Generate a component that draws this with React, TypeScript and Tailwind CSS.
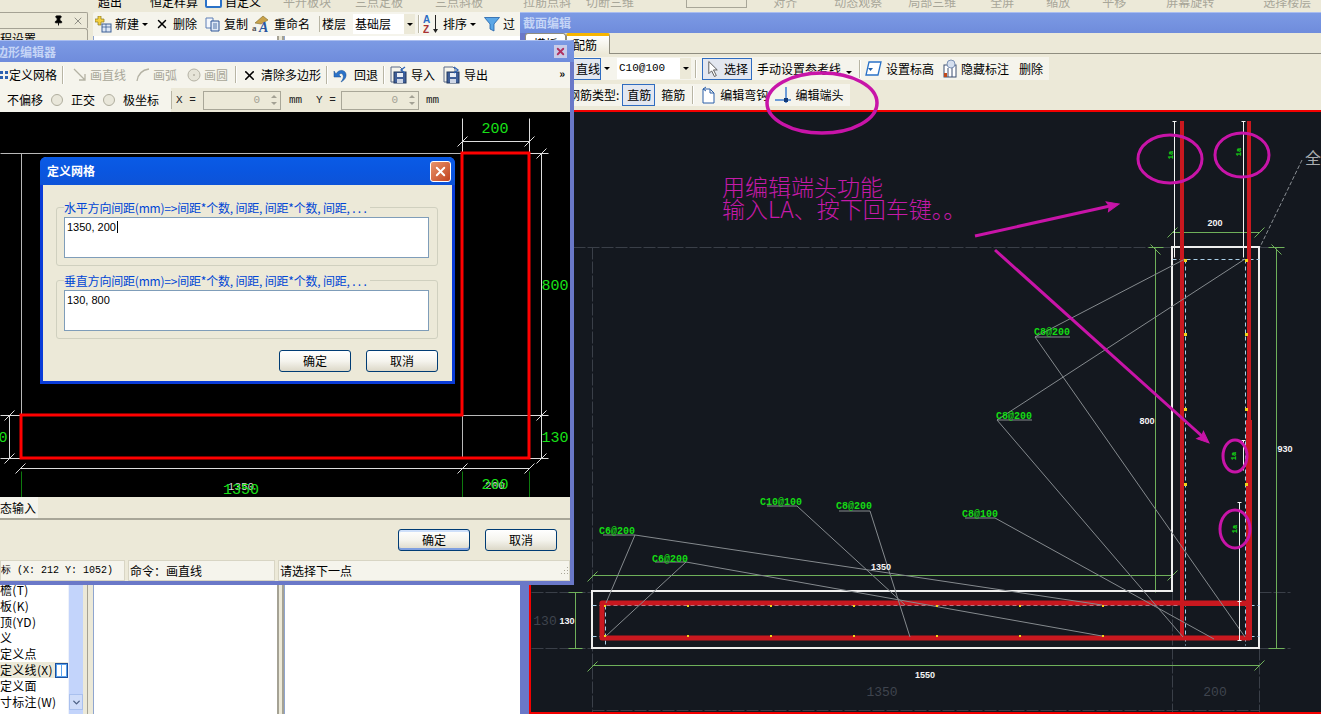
import { X, Pin, ChevronDown } from "lucide-react";
import type { ReactNode } from "react";

const cn = "font-['Noto_Sans_CJK_SC','Liberation_Sans',sans-serif]";
const DIM = "#6fb05a";
const GREEN = "#14dc14";
const PURPLE = "#c814a8";

function Arrow() {
  return <span className="mx-[3px] inline-block border-x-[3px] border-t-[3px] border-x-transparent border-t-black" />;
}

function Sep() {
  return <span className="mx-[5px] h-[18px] w-[2px] border-l border-r border-l-[#b8b5a4] border-r-white shrink-0" />;
}

function Btn({ children, active, className = "" }: { children: ReactNode; active?: boolean; className?: string }) {
  return (
    <span className={`flex items-center h-[22px] px-[4px] whitespace-nowrap ${active ? "border border-[#2f6cc0] bg-[#e3e7f0]" : ""} ${className}`}>
      {children}
    </span>
  );
}

function NewIcon() {
  return (
    <svg width="17" height="17" viewBox="0 0 17 17" className="mr-[3px]">
      <path d="M3 0h3v3h3v3H6v3H3V6H0V3h3z" fill="#f4d03f" stroke="#8a7a20" strokeWidth="0.7" />
      <rect x="7" y="8" width="9" height="8" fill="#dce6f5" stroke="#3c5f96" />
      <path d="M7 11h9M11 8v8" stroke="#3c5f96" strokeWidth="0.8" />
    </svg>
  );
}

function CopyIcon() {
  return (
    <svg width="15" height="15" viewBox="0 0 15 15" className="mr-[4px]">
      <path d="M1 1h7v10H1z" fill="#f4f7fc" stroke="#5c7fb5" />
      <path d="M6 4h8v10H6z" fill="#dfe9f7" stroke="#2e5596" />
      <path d="M8 7h4M8 9h4M8 11h4" stroke="#2e5596" strokeWidth="0.8" />
    </svg>
  );
}

function RenameIcon() {
  return (
    <svg width="19" height="18" viewBox="0 0 19 18" className="mr-[3px]">
      <path d="M3 8 L11 1 L16 5 L9 9z" fill="#c9a24a" stroke="#7d6a2a" strokeWidth="0.6" />
      <text x="0" y="16" fontSize="9" fontFamily="Liberation Serif" fontWeight="700" fill="#555">a</text>
      <text x="7" y="17" fontSize="14" fontFamily="Liberation Serif" fontWeight="700" fontStyle="italic" fill="#2754a0">A</text>
    </svg>
  );
}

function SortIcon() {
  return (
    <svg width="17" height="21" viewBox="0 0 17 21" className="mr-[3px]">
      <text x="0" y="9" fontSize="10" fontFamily="Liberation Sans" fontWeight="700" fill="#2b6cc4">A</text>
      <text x="0" y="19" fontSize="10" fontFamily="Liberation Sans" fontWeight="700" fill="#a83232">Z</text>
      <path d="M12.5 1v15" stroke="#222" />
      <path d="M10 15h5l-2.500 4z" fill="#222" />
    </svg>
  );
}

function FunnelIcon() {
  return (
    <svg width="16" height="16" viewBox="0 0 16 16" className="mr-[3px]">
      <path d="M0.500 1.500h15L10 8v7l-4-2V8z" fill="#5ba7e6" stroke="#1f5fa8" strokeWidth="0.8" />
    </svg>
  );
}

function DiskIcon({ out }: { out?: boolean }) {
  return (
    <svg width="18" height="18" viewBox="0 0 18 18" className="mr-[3px]">
      <path d="M1 1h9l2 2v3M1 1v15h3" fill="none" stroke="#5a6b88" />
      <rect x="4" y="6" width="12" height="11" fill="#3f5f98" stroke="#22385f" />
      <rect x="7" y="7" width="6" height="4" fill="#e9eef6" />
      <rect x="7" y="13" width="6" height="4" fill="#cfd7e6" />
      <path d={out ? "M11 1l4 3-4 3" : "M15 1l-4 3 4 3"} fill="none" stroke="#2c64b8" strokeWidth="1.300" />
    </svg>
  );
}

function UndoIcon() {
  return (
    <svg width="16" height="16" viewBox="0 0 16 16" className="mr-[5px]">
      <path d="M3 7 C6 1 14 3 13 9 C12.500 12 10 14 8 15 C10 12 11 10 10 8 C9 6 7 6 6 8 L8 10 H1 V4z" fill="#2a72c8" stroke="#174c90" strokeWidth="0.5" />
    </svg>
  );
}

function GridIcon() {
  return (
    <svg width="8" height="14" viewBox="0 0 8 14" className="mr-[1px]">
      <path d="M0 3h3v3H0zM5 3h3v3H5zM0 8h3v3H0zM5 8h3v3H5z" fill="#2e62b0" />
    </svg>
  );
}

function Spin({ v }: { v: string }) {
  return (
    <span className="flex h-[19px] w-[78px] items-center border border-[#a9a798] bg-[#ece9d8] text-[#a3a194] font-['Liberation_Mono',monospace] text-[11px]">
      <span className="flex-1 text-right pr-[7px]">{v}</span>
      <span className="flex w-[13px] flex-col items-center gap-[4px]">
        <span className="border-x-[3px] border-b-[3px] border-x-transparent border-b-[#a3a194]" />
        <span className="border-x-[3px] border-t-[3px] border-x-transparent border-t-[#a3a194]" />
      </span>
    </span>
  );
}

function Radio() {
  return <span className="mx-[8px] h-[12px] w-[12px] rounded-full border border-[#b0ae9e] bg-[#e9e7da] shrink-0" />;
}

function XpButton({ children, primary, className = "" }: { children: ReactNode; primary?: boolean; className?: string }) {
  return (
    <span className={`flex h-[22px] w-[72px] items-center justify-center rounded-[3px] border border-[#003c74] bg-gradient-to-b from-white via-[#f5f4ee] to-[#dcd8c8] text-[12px] text-black ${primary ? "shadow-[inset_0_-2px_0_#7f9fe0,inset_0_2px_0_#cfe0fa]" : ""} ${className}`}>
      {children}
    </span>
  );
}

const treeRows = ["檐(T)", "板(K)", "顶(YD)", "义", "定义点", "定义线(X)", "定义面", "寸标注(W)"];

function Background() {
  return (
    <div className="flex h-full flex-col">
      {/* faded main toolbar, cut off at the top */}
      <div className="flex h-[12px] items-end overflow-hidden bg-[#ece9d8] text-[12px] leading-[12px] text-[#a8a698] whitespace-nowrap">
        <div className="relative -top-[4px] flex items-center pl-[98px]">
          <span className="text-black">超出</span>
          <span className="ml-[28px] text-black">恒定样算</span>
          <span className="ml-[7px] h-[12px] w-[17px] rounded-b-[2px] border-2 border-[#2a72c8] bg-white" />
          <span className="ml-[3px] text-black">自定义</span>
          <span className="ml-[22px]">平开板块</span>
          <span className="ml-[24px]">三点定板</span>
          <span className="ml-[32px]">三点斜板</span>
          <span className="ml-[40px]">拉筋点斜</span>
          <span className="ml-[15px]">切断三维</span>
          <span className="ml-[52px] h-[12px] w-[61px] border border-[#a8a698]" />
          <span className="ml-[26px]">对齐</span>
          <span className="ml-[37px]">动态观察</span>
          <span className="ml-[26px]">局部三维</span>
          <span className="ml-[34px]">全屏</span>
          <span className="ml-[32px]">缩放</span>
          <span className="ml-[32px]">平移</span>
          <span className="ml-[40px]">屏幕旋转</span>
          <span className="ml-[49px]">选择楼层</span>
        </div>
      </div>

      <div className="flex min-h-0 flex-1">
        {/* left tree panel */}
        <div className="flex w-[88px] shrink-0 flex-col bg-[#ece9d8]">
          <div className="flex h-[16px] shrink-0 items-center justify-end gap-[8px] rounded-tr-[2px] border-t border-r border-[#a5a294] pr-[3px]">
            <Pin size={11} className="text-black" fill="black" />
            <X size={12} strokeWidth={1} className="text-[#333]" />
          </div>
          <div className="h-[24px] shrink-0 overflow-hidden rounded-tr-[3px] border-t border-r border-[#a5a294] pt-[2px] text-[12px] leading-[16px] whitespace-nowrap">程设置</div>
          <div className="flex min-h-0 flex-1 border-r border-[#a5a294] pr-[4px]">
            <div className="flex flex-1 min-h-0 bg-white">
              <div className="flex flex-1 min-w-0 flex-col">
                <div className="mt-auto mb-[4px] flex flex-col text-[12px] leading-[16px] whitespace-nowrap">
                  {treeRows.map((row) => (
                    <div key={row} className={`flex h-[16px] items-center overflow-hidden ${row === "定义线(X)" ? "bg-[#ece9d8]" : ""}`}>
                      <span className="tracking-[0.3px]">{row}</span>
                      {row === "定义线(X)" && (
                        <span className="ml-auto flex h-[15px] w-[13px] shrink-0 gap-[1px] border border-[#1c4f9c] bg-[#5aa3ee] p-[1px]">
                          <span className="flex-1 bg-white" />
                          <span className="flex-1 bg-white" />
                        </span>
                      )}
                    </div>
                  ))}
                </div>
              </div>
              <div className="flex w-[15px] shrink-0 flex-col border-l border-[#eef2fb] bg-[#c3d4fb]">
                <div className="mt-auto mb-[4px] flex h-[16px] items-center justify-center border border-[#a9c0ee] bg-[#cfdcf9] text-[#4d6185]">
                  <ChevronDown size={11} strokeWidth={3} />
                </div>
              </div>
            </div>
          </div>
        </div>

        <div className="min-w-0 flex-1 flex-col">
          <div className="ml-[5px] flex h-[24px] items-center rounded-tl-[3px] bg-[#f5f4ec] pl-[2px] text-[12px] whitespace-nowrap">
            <Btn className="!px-0"><NewIcon />新建<Arrow /></Btn>
            <Btn className="!pl-[4px]"><X size={14} strokeWidth={2.500} className="mr-[4px]" />删除</Btn>
            <Btn><CopyIcon />复制</Btn>
            <Btn className="!pl-0"><RenameIcon />重命名</Btn>
            <span className="ml-[5px] h-[16px] w-px bg-[#b8b5a4]" />
            <span className="ml-[2px]">楼层</span>
            <span className="ml-[7px] flex h-[20px] w-[62px] items-center justify-between bg-white pl-[2px]">基础层<span className="flex h-full w-[11px] items-center justify-center bg-[#ece9d8]"><span className="border-x-[3px] border-t-[3px] border-x-transparent border-t-black" /></span></span>
            <span className="mx-[3px] h-[18px] w-[2px] border-x border-l-[#b8b5a4] border-r-white shrink-0" />
            <SortIcon />排序<Arrow />
            <span className="ml-[5px] flex items-center"><FunnelIcon />过</span>
          </div>
          <div className="flex h-[calc(100%-24px)]">
            <div className="w-[5px] bg-[#ece9d8]" />
            <div className="w-[184px] border-l border-[#8fa5cf] bg-white" />
            <div className="w-[7px] border-x-2 border-[#a5a294] bg-[#ece9d8]" />
            <div className="flex-1 border-l border-[#8fa5cf] bg-white" />
          </div>
        </div>
      </div>
    </div>
  );
}

function Tick({ x, y, dir = 1 }: { x: number; y: number; dir?: number }) {
  return <path d={`M${x - 5 * dir} ${y + 5}L${x + 5 * dir} ${y - 5}`} stroke="currentColor" />;
}

const rebarLabels = [
  { t: "C8@200", x: 1052, y: 335 },
  { t: "C8@200", x: 1014, y: 419 },
  { t: "C10@100", x: 781, y: 505 },
  { t: "C8@200", x: 854, y: 509 },
  { t: "C8@100", x: 980, y: 517 },
  { t: "C6@200", x: 617, y: 534 },
  { t: "C6@200", x: 670, y: 562 },
];

const leaders = [
  "M1035 337H1070", "M1035 337L1185 259", "M1035 337L1245 637",
  "M997 420H1032", "M997 420L1245 259", "M997 420L1183 637",
  "M767 506H797L905 605",
  "M839 511H870L910 637",
  "M965 518H995L1214 639",
  "M603 535H635L1102 605", "M635 535L606 603",
  "M655 562H686L1102 636", "M686 562L606 636",
];

const rebarDots = [605, 688, 771, 854, 937, 1020, 1103];
const colDots = [259, 333, 408, 483];

function SectionDrawing() {
  return (
    <svg viewBox="531 112 790 600" className="block h-full w-full" fontFamily="Liberation Mono, monospace">
      {/* construction grid */}
      <g stroke="#3a3f48" strokeDasharray="12 2" fill="none" transform="translate(0.5 0.5)">
        <path d="M531 247H1172M1259 247H1272M531 592H592M1259 592H1290M531 648H592M1259 648H1290" />
        <path d="M592 247V712M1172 591V712M1259 648V712M592 710H1259" />
      </g>
      <g fill="#3f444e" fontSize="13" textAnchor="middle">
        <text x="882" y="696">1350</text>
        <text x="1215" y="696">200</text>
        <text x="545" y="625">130</text>
      </g>

      {/* dimensions */}
      <g stroke={DIM} fill="none" color={DIM} transform="translate(0.5 0.5)">
        <path d="M1172 232H1259" />
        <Tick x={1172} y={232} /><Tick x={1259} y={232} />
        <path d="M1155 248V592M1148 247H1163" />
        <Tick x={1155} y={249} dir={-1} />
        <path d="M1276 248V648M1268 247H1284M1268 648H1284" />
        <Tick x={1276} y={249} dir={-1} />
        <path d="M592 575H1172" />
        <Tick x={592} y={576} /><Tick x={1172} y={575} />
        <path d="M592 665H1259" />
        <Tick x={592} y={666} /><Tick x={1259} y={665} />
        <path d="M575 592V648M568 592H582M568 648H582" />
      </g>

      {/* concrete outline */}
      <path d="M592 591H1172V247H1259V648H592Z" fill="none" stroke="#eeeeee" strokeWidth="2" />

      {/* stirrup centre lines */}
      <g stroke="#a9cfe8" strokeDasharray="4 3" fill="none" transform="translate(0.5 0.5)">
        <path d="M592 605H1259M592 636H1259M1172 259H1259M605 605V645M1185 259V645M1245 259V645" />
      </g>

      {/* rebars */}
      <g fill="#c9181f">
        <rect x="1180" y="121" width="4" height="519" />
        <rect x="1247" y="121" width="4" height="300" />
        <rect x="1246" y="420" width="6" height="220" />
        <rect x="1180" y="601" width="67" height="5" />
      </g>
      <path d="M1247 603H602V638H1250" fill="none" stroke="#c9181f" strokeWidth="5" strokeLinejoin="round" />

      {/* leaders */}
      <g stroke="#858a8e" fill="none">
        {leaders.map((d) => <path key={d} d={d} />)}
      </g>

      <g fill="#f2d21a">
        {rebarDots.map((x) => (
          <g key={x}>
            <rect x={x - 1} y={605} width="2" height="2" />
            <rect x={x - 1} y={635} width="2" height="2" />
          </g>
        ))}
        {colDots.map((y) => (
          <g key={y}>
            <rect x={1184} y={y} width="3" height="3" />
            <rect x={1245} y={y} width="3" height="3" />
          </g>
        ))}
      </g>

      {/* bar ends */}
      <g stroke="#f4f4f4" fill="none" transform="translate(0.5 0.5)">
        <path d="M1174 121V257M1172 121H1176M1243 121V257M1241 121H1245M1243 440V470M1241 440H1245M1239 502V640M1237 502H1241M1237 601H1241M1237 640H1241" />
      </g>

      <g fill={GREEN} fontSize="7" fontWeight="700" textAnchor="middle">
        <text transform="translate(1173 155) rotate(-90)">1a</text>
        <text transform="translate(1241 152) rotate(-90)">1a</text>
        <text transform="translate(1236 456) rotate(-90)">1a</text>
        <text transform="translate(1237 529) rotate(-90)">1a</text>
      </g>

      <g fill={GREEN} fontSize="10" fontWeight="700" textAnchor="middle">
        {rebarLabels.map((l) => <text key={l.t + l.x} x={l.x} y={l.y}>{l.t}</text>)}
      </g>

      <g fill="#f4f4f4" fontSize="9" fontWeight="700" textAnchor="middle" fontFamily="Liberation Sans, sans-serif">
        <text x="1215" y="226">200</text>
        <text x="1147" y="424">800</text>
        <text x="1285" y="452">930</text>
        <text x="881" y="570">1350</text>
        <text x="925" y="678">1550</text>
        <text x="567" y="624">130</text>
      </g>

      <path d="M1302 160L1260 247" stroke="#8a8f94" strokeDasharray="4 2" fill="none" />
      <text x="1305" y="164" fontSize="16" fill="#a9adb0" fontFamily="Noto Sans CJK SC">全</text>
    </svg>
  );
}

function SectionWindow() {
  return (
    <div className={`absolute bottom-0 left-[520px] right-0 top-[12px] flex flex-col border-t border-[#a9bdef] bg-[#ece9d8] ${cn}`}>
      <div className="flex h-[20px] shrink-0 items-center bg-gradient-to-b from-[#7c9ae4] to-[#6f8cdc] pl-[3px] text-[12px] font-bold text-[#c5d5f6]">截面编辑</div>
      <div className="flex flex-1 min-h-0 border-l-[9px] border-[#6a78c8]">
        <div className="flex min-w-0 flex-1 flex-col">
          <div className="relative h-[21px] shrink-0 border-b border-[#8f8d80]">
            <span className="absolute left-[-4px] top-0 flex h-[21px] w-[41px] justify-center rounded-t-[3px] border-x border-t border-[#8f8d80] bg-white pt-[2px] text-[12px] leading-[16px]">模板</span>
            <span className="absolute left-[37px] top-0 flex h-[21px] w-[44px] items-center rounded-t-[2px] border-x border-[#8f8d80] border-t-[3px] border-t-[#f7b500] bg-gradient-to-b from-white to-[#ece9d8] pl-[6px] text-[12px]">配筋</span>
          </div>
          <div className="flex flex-col gap-[4px] pl-[44px] pt-[3px] text-[12px] text-black whitespace-nowrap">
            <div className="flex h-[23px] w-[476px] items-center bg-[#f5f4ec] [&>*]:shrink-0">
              <Btn active className="w-[28px] !px-[2px]">直线</Btn>
              <Arrow />
              <span className="ml-[4px] flex h-[21px] w-[74px] items-center justify-between bg-white pl-[2px] font-['Liberation_Mono',monospace] text-[11px]">C10@100<span className="flex h-full w-[11px] items-center justify-center bg-[#ece9d8]"><span className="border-x-[3px] border-t-[3px] border-x-transparent border-t-black" /></span></span>
              <span className="mx-[4px] h-[18px] w-[2px] border-x border-l-[#b8b5a4] border-r-white" />
              <Btn active className="ml-[1px] w-[50px] !px-[3px]">
                <svg width="16" height="18" viewBox="0 0 16 18" className="mr-[3px]"><path d="M3 1v13l3-3 3 6 2-1-3-6h4z" fill="#fff" stroke="#555" /></svg>
                选择
              </Btn>
              <span className="ml-[5px]">手动设置参考线</span>
              <span className="ml-[2px]"><Arrow /></span>
              <span className="mx-[4px] h-[18px] w-[2px] border-x border-l-[#b8b5a4] border-r-white" />
              <svg width="17" height="17" viewBox="0 0 17 17" className="mr-[4px]"><path d="M4 2h12l-3 13H1z" fill="#fff" stroke="#2a72c8" strokeWidth="1.300" /><path d="M3 8h5l-2.500 3z" fill="#1f5fa8" /></svg>
              <span>设置标高</span>
              <svg width="15" height="19" viewBox="0 0 15 19" className="ml-[9px] mr-[3px]"><rect x="1" y="6" width="12" height="12" fill="#fff" stroke="#3c4f70" /><circle cx="8" cy="5" r="4" fill="#d5dfee" stroke="#7d92b5" /><path d="M5 18V9M9 18V9" stroke="#3c4f70" /><rect x="1" y="14" width="3" height="4" fill="#c04a1a" /></svg>
              <span>隐藏标注</span>
              <span className="ml-[10px]">删除</span>
            </div>
            <div className="flex h-[22px] w-[277px] items-center bg-[#f5f4ec] [&>*]:shrink-0">
              <span className="-ml-[5px]">钢筋类型:</span>
              <Btn active className="ml-[3px] w-[33px] !px-[4px]">直筋</Btn>
              <span className="ml-[6px]">箍筋</span>
              <span className="mx-[7px] h-[18px] w-[2px] border-x border-l-[#b8b5a4] border-r-white" />
              <svg width="15" height="18" viewBox="0 0 15 18" className="mr-[4px]"><path d="M2 3h7l4 4v10H2zM9 3v4h4" fill="#fff" stroke="#2a5ea8" /><path d="M5 1l-3 2 3 2" fill="none" stroke="#2a5ea8" /></svg>
              <span>编辑弯钩</span>
              <svg width="18" height="18" viewBox="0 0 18 18" className="ml-[6px] mr-[3px]"><path d="M1 14H17" stroke="#3f7ed0" strokeWidth="1.500" /><path d="M12 1V17" stroke="#3f7ed0" strokeWidth="1.500" /><rect x="10" y="12" width="4" height="4" fill="#123a78" /></svg>
              <span>编辑端头</span>
            </div>
          </div>
          <div className="mt-[4px] min-h-0 flex-1 border-y-2 border-l-2 border-[#f20000] bg-[#14181f]">
            <SectionDrawing />
          </div>
        </div>
      </div>
    </div>
  );
}

function PolygonDrawing() {
  return (
    <svg viewBox="0 112 570 385" className="block h-full w-full" fontFamily="Liberation Mono, monospace">
      <g stroke="#dddddd" fill="none" transform="translate(0.5 0.5)">
        <path d="M0 153H462M21 153V415M462 415H529M462 415V458" stroke="#b9b9b9" />
        <path d="M462 141H529M541 153V458M529 153H548M529 415H548M529 458H548M9 415V458M0 415H20M0 458H20M20 468H529" />
        <path d="M457 146L467 136M524 146L534 136M536 158L546 148M536 420L546 410M536 463L546 453M4 420L14 410M4 463L14 453M15 473L25 463M457 473L467 463M524 473L534 463M462 118V153M529 118V153" />
      </g>
      <g stroke="#0e7a0e" fill="none" transform="translate(0.5 0.5)">
        <path d="M21 471V497M462 471V497M529 471V497" />
      </g>
      <path d="M21 415V458H529V153H462V415Z" fill="none" stroke="#ff0000" strokeWidth="3" />
      <text x="241" y="490" fill="#d8d8d8" fontSize="11" textAnchor="middle">1350</text>
      <text x="495" y="489" fill="#d8d8d8" fontSize="11" textAnchor="middle">200</text>
      <g fill="#18e018" fontSize="15" textAnchor="middle">
        <text x="495" y="133">200</text>
        <text x="555" y="290">800</text>
        <text x="555" y="442">130</text>
        <text x="3" y="442">0</text>
        <text x="241" y="494">1350</text>
        <text x="495" y="489">200</text>
      </g>
    </svg>
  );
}

function PolygonWindow() {
  return (
    <div className={`absolute left-[-4px] top-[40px] flex h-[545px] w-[578px] flex-col border-x-4 border-b-4 border-[#6a78c8] border-t border-t-[#a9bdef] bg-[#ece9d8] ${cn}`}>
      <div className="-mx-[4px] flex h-[21px] shrink-0 items-center justify-between bg-gradient-to-b from-[#7c9ae4] to-[#6f8cdc] pr-[7px] text-[12px] font-bold text-[#c5d5f6]">
        <span className="flex w-[60px] justify-end overflow-hidden whitespace-nowrap">多边形编辑器</span>
        <span className="flex h-[13px] w-[13px] items-center justify-center bg-[#c8cbe8] text-[#b03060]"><X size={11} strokeWidth={4} /></span>
      </div>
      <div className="relative flex h-[26px] shrink-0 items-center bg-[#f5f4ec] text-[12px] text-black whitespace-nowrap">
        <GridIcon />
        定义网格
        <Sep />
        <span className="ml-[4px] flex items-center text-[#a8a698]">
          <svg width="14" height="14" viewBox="0 0 14 14" className="mr-[3px]"><path d="M1 1l11 11M12 6v6H6" fill="none" stroke="#b4b2a4" strokeWidth="1.300" /></svg>
          画直线
          <svg width="14" height="14" viewBox="0 0 14 14" className="ml-[10px] mr-[3px]"><path d="M1 13C2 6 6 2 13 1" fill="none" stroke="#b4b2a4" strokeWidth="1.300" /></svg>
          画弧
          <svg width="14" height="14" viewBox="0 0 14 14" className="ml-[10px] mr-[3px]"><circle cx="7" cy="7" r="6" fill="#e6e4d8" stroke="#b4b2a4" /><circle cx="7" cy="7" r="1" fill="#b4b2a4" /></svg>
          画圆
        </span>
        <span className="ml-[2px]"><Sep /></span>
        <X size={15} strokeWidth={2.500} className="mr-[4px]" />
        清除多边形
        <Sep />
        <UndoIcon />
        回退
        <Sep />
        <DiskIcon />
        导入
        <span className="ml-[8px] flex items-center"><DiskIcon out />导出</span>
        <span className="absolute right-[5px] top-[5px] text-[11px] font-bold leading-[12px]">»</span>
      </div>
      <div className="flex h-[24px] shrink-0 items-center whitespace-nowrap text-[12px] text-black">
        <div className="flex h-full w-[171px] items-center bg-[#f5f4ec] pl-[7px]">
          不偏移
          <Radio />
          正交
          <Radio />
          极坐标
        </div>
        <span className="h-[18px] w-px bg-[#b8b5a4]" />
        <div className="flex items-center font-['Liberation_Mono',monospace] text-[11px] text-[#222]">
          <span className="ml-[4px] w-[27px]">X =</span>
          <Spin v="0" />
          <span className="ml-[8px] w-[27px]">mm</span>
          <span className="w-[25px]">Y =</span>
          <Spin v="0" />
          <span className="ml-[7px]">mm</span>
        </div>
      </div>
      <div className="h-[385px] shrink-0 bg-black">
        <PolygonDrawing />
      </div>
      <div className="flex h-[23px] shrink-0 items-center border-b-2 border-[#a8a698] text-[12px]">
        <span className="flex h-full w-[38px] items-center justify-end bg-[#f5f4ec] pr-[2px]">态输入</span>
      </div>
      <div className="flex h-[40px] shrink-0 items-center justify-end gap-[15px] pr-[13px]">
        <XpButton primary>确定</XpButton>
        <XpButton>取消</XpButton>
      </div>
      <div className="flex h-[21px] shrink-0 gap-[3px] text-[12px]">
        <span className="flex w-[125px] items-center overflow-hidden whitespace-nowrap border border-[#d8d5c4] bg-[#f5f4ec] font-['Liberation_Mono',monospace] text-[10px]">标 (X: 212 Y: 1052)</span>
        <span className="flex w-[147px] items-center border border-[#d8d5c4] bg-[#f5f4ec] pl-[1px]">命令：画直线</span>
        <span className="flex flex-1 items-center justify-between border border-[#d8d5c4] bg-[#f5f4ec] pl-[1px]">
          请选择下一点
          <svg width="10" height="10" viewBox="0 0 10 10"><path d="M8 1h1v1H8zM5 4h1v1H5zM8 4h1v1H8zM2 7h1v1H2zM5 7h1v1H5zM8 7h1v1H8z" fill="#a8a698" /></svg>
        </span>
      </div>
    </div>
  );
}

function GridGroup({ legend, value, caret }: { legend: string; value: string; caret?: boolean }) {
  return (
    <div className="relative h-[59px] rounded-[3px] border border-[#d0d0bf] pl-[7px] pr-[8px] pt-[9px]">
      <span className="absolute -top-[8px] left-[7px] bg-[#ece9d8] pr-[3px] text-[12px] leading-[16px] tracking-[-0.2px] text-[#0046d5] whitespace-nowrap">{legend}</span>
      <div className="flex h-[41px] items-start border border-[#7f9db9] bg-white pl-[2px] pt-[2px] font-['Liberation_Sans',sans-serif] text-[11px] leading-[14px] text-black">
        {value}
        {caret && <span className="ml-px mt-[1px] h-[12px] w-px bg-black" />}
      </div>
    </div>
  );
}

function GridDialog() {
  return (
    <div className={`absolute left-[40px] top-[157px] flex h-[227px] w-[415px] flex-col rounded-t-[6px] border-x-[3px] border-b-[3px] border-[#0a3cd8] bg-[#ece9d8] ${cn}`}>
      <div className="-mx-[3px] flex h-[28px] shrink-0 items-center justify-between rounded-t-[6px] bg-gradient-to-b from-[#0a5be6] via-[#0a56e0] to-[#0d53d8] pl-[7px] pr-[4px] text-[12px] font-bold text-white">
        定义网格
        <span className="flex h-[21px] w-[21px] items-center justify-center rounded-[3px] border border-white bg-gradient-to-br from-[#e8946a] to-[#c0401c] text-white"><X size={15} strokeWidth={3} /></span>
      </div>
      <div className="flex flex-1 flex-col gap-[14px] pl-[13px] pr-[14px] pt-[22px]">
        <GridGroup legend="水平方向间距(mm)=>间距*个数, 间距, 间距*个数, 间距, . . ." value="1350, 200" caret />
        <GridGroup legend="垂直方向间距(mm)=>间距*个数, 间距, 间距*个数, 间距, . . ." value="130, 800" />
        <div className="mt-[-3px] flex justify-end gap-[15px]">
          <XpButton>确定</XpButton>
          <XpButton>取消</XpButton>
        </div>
      </div>
    </div>
  );
}

function Annotations() {
  const head = (x: number, y: number, a: number) => (
    <path d="M0 0L-12 -5L-10 0L-12 5Z" transform={`translate(${x} ${y}) rotate(${a})`} fill={PURPLE} />
  );
  return (
    <>
      <svg viewBox="0 0 1321 714" className="pointer-events-none absolute inset-0 h-full w-full" fill="none" stroke={PURPLE}>
        <ellipse cx="822" cy="103" rx="55" ry="30" strokeWidth="3.500" />
        <ellipse cx="1170" cy="159" rx="32" ry="24" strokeWidth="3" />
        <ellipse cx="1242" cy="155" rx="27" ry="22" strokeWidth="3" />
        <ellipse cx="1235" cy="456" rx="12" ry="16" strokeWidth="3" />
        <ellipse cx="1235" cy="529" rx="15" ry="19" strokeWidth="3" />
        <path d="M975 236L1110 206" strokeWidth="3" />
        <path d="M995 250L1203 437" strokeWidth="3" />
        {head(1119, 204, -13)}
        {head(1209, 443, 42)}
      </svg>
      <div className={`pointer-events-none absolute left-[722px] top-[175px] text-[23px] font-light leading-[22px] text-[#c41aa8] whitespace-nowrap ${cn}`}>
        用编辑端头功能<br />输入LA、按下回车键。。
      </div>
    </>
  );
}

export default function App() {
  return (
    <div className={`relative h-[714px] w-[1321px] overflow-hidden bg-[#ece9d8] ${cn}`}>
      <Background />
      <SectionWindow />
      <PolygonWindow />
      <GridDialog />
      <Annotations />
    </div>
  );
}
